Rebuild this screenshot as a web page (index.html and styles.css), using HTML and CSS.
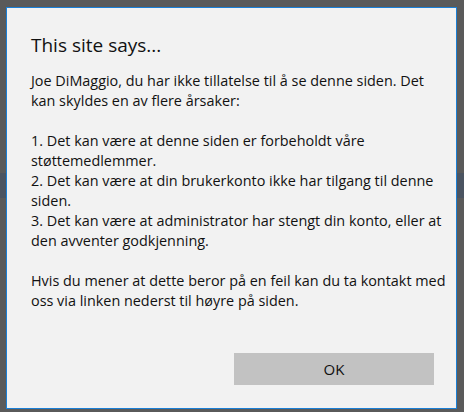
FILE: index.html
```html
<!DOCTYPE html>
<html>
<head>
  <link rel="stylesheet" href="styles.css">
</head>
<body>

  <div class="dialog">
    <h1 class="dialog-title">This site says...</h1>
    <p class="dialog-text">
      Joe DiMaggio, du har ikke tillatelse til å se denne siden. Det<br>
      kan skyldes en av flere årsaker:<br>
      <br>
      1. Det kan være at denne siden er forbeholdt våre<br>
      støttemedlemmer.<br>
      2. Det kan være at din brukerkonto ikke har tilgang til denne<br>
      siden.<br>
      3. Det kan være at administrator har stengt din konto, eller at<br>
      den avventer godkjenning.<br>
      <br>
      Hvis du mener at dette beror på en feil kan du ta kontakt med<br>
      oss via linken nederst til høyre på siden.
    </p>
    <div class="dialog-buttons">
      <button class="ok-btn">OK</button>
    </div>
  </div>

</body>
</html>
```

FILE: styles.css
```css
html, body { margin: 0; height: 100%; }
body {
  font-family: "Open Sans", "Noto Sans", sans-serif;
  background-color: #5a5a5a;
  background-image: linear-gradient(to bottom,
    transparent 173px, #4b5461 173px, #4b5461 198px, transparent 198px);
  padding: 7px 7px 3px 6px;
  box-sizing: border-box;
}
.dialog {
  width: 451px;
  height: 402px;
  box-sizing: border-box;
  border: 1px solid #1a7fd6;
  background: #f2f2f2;
  padding: 23px 22px 23px 24px;
  display: flex;
  flex-direction: column;
  color: #111;
}
.dialog-title {
  font-size: 19px;
  font-weight: normal;
  line-height: 28px;
  margin: 0 0 12px 0;
}
.dialog-text {
  font-size: 14.4px;
  line-height: 20px;
  margin: 0;
  white-space: nowrap;
  flex: 1;
}
.dialog-buttons { display: flex; justify-content: flex-end; }
.ok-btn {
  width: 200px;
  height: 32px;
  border: none;
  background: #c2c2c2;
  font-family: inherit;
  font-size: 15px;
  color: #111;
}
```
